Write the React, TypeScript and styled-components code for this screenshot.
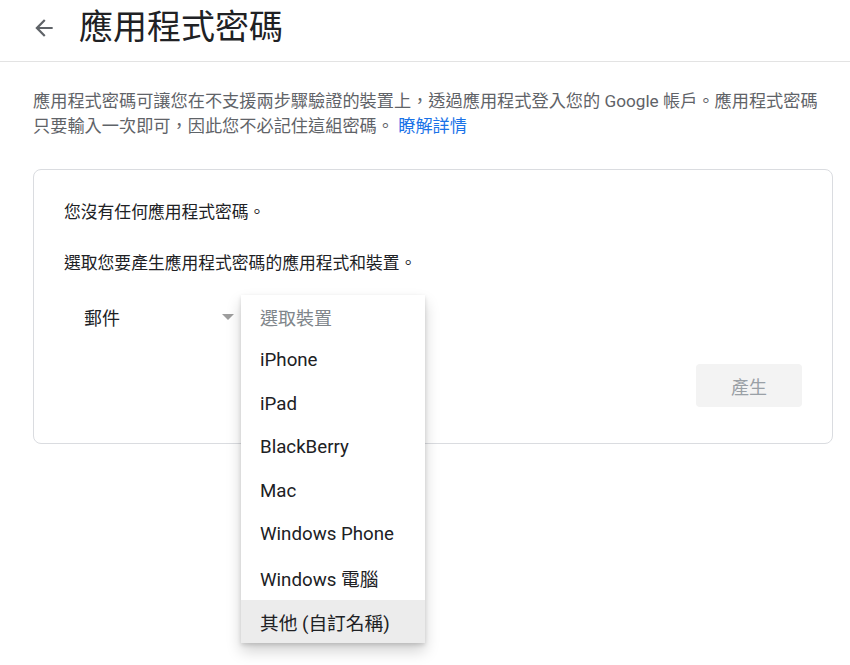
import React from 'react';
import styled, { createGlobalStyle } from 'styled-components';

const GlobalStyle = createGlobalStyle`
  html, body {
    margin: 0;
    padding: 0;
    background: #fff;
    font-family: Roboto, "Noto Sans CJK TC", "Noto Sans", sans-serif;
    color: #202124;
  }
`;

const Page = styled.div`
  width: 850px;
  min-height: 665px;
  overflow: hidden;
`;

const Header = styled.header`
  display: flex;
  align-items: center;
  height: 62px;
  padding-left: 31px;
  border-bottom: 1px solid #e3e3e3;
  box-sizing: border-box;
`;

const BackButton = styled.button`
  display: flex;
  align-items: center;
  justify-content: center;
  width: 26px;
  height: 26px;
  padding: 0;
  margin-right: 22px;
  margin-top: -6px;
  border: none;
  background: transparent;
  color: #5f6368;
  cursor: pointer;
`;

const Title = styled.h1`
  margin: 0 0 8px;
  font-size: 34px;
  font-weight: 400;
  line-height: 40px;
  color: #202124;
`;

const Content = styled.main`
  width: 800px;
  margin: 27px 0 0 33px;
`;

const Intro = styled.p`
  margin: 0;
  font-size: 17.2px;
  line-height: 25px;
  color: #5f6368;
`;

const Link = styled.a`
  color: #1a73e8;
  text-decoration: none;
`;

const Card = styled.section`
  position: relative;
  margin-top: 30px;
  padding: 30px 30px 36px;
  border: 1px solid #dadce0;
  border-radius: 8px;
`;

const CardText = styled.p<{ $gap?: number }>`
  margin: ${({ $gap }) => $gap ?? 0}px 0 0;
  font-size: 16.8px;
  line-height: 24px;
  color: #202124;
`;

const Controls = styled.div`
  display: flex;
  margin-top: 20px;
  height: 44px;
`;

const Select = styled.div`
  position: relative;
  display: flex;
  align-items: center;
  width: 177px;
  height: 44px;
  padding-left: 20px;
  box-sizing: border-box;
  font-size: 18px;
  color: #202124;
`;

const Caret = styled.span`
  position: absolute;
  right: 7px;
  top: 19px;
  width: 0;
  height: 0;
  border-left: 6px solid transparent;
  border-right: 6px solid transparent;
  border-top: 6px solid #9e9e9e;
`;

const Menu = styled.ul`
  position: absolute;
  top: 0;
  left: 0;
  z-index: 10;
  width: 184px;
  margin: 0;
  padding: 0;
  list-style: none;
  background: #fff;
  box-shadow: 0 2px 4px rgba(0, 0, 0, 0.14), 0 8px 14px rgba(0, 0, 0, 0.18);
`;

const MenuItem = styled.li<{ $placeholder?: boolean; $active?: boolean }>`
  display: flex;
  align-items: center;
  height: 43.5px;
  padding-left: 19px;
  font-size: ${({ $placeholder }) => ($placeholder ? 18 : 18.7)}px;
  font-weight: 400;
  color: ${({ $placeholder }) => ($placeholder ? '#80868b' : '#202124')};
  background: ${({ $active }) => ($active ? '#ececec' : 'transparent')};
`;

const Actions = styled.div`
  display: flex;
  justify-content: flex-end;
  margin-top: 25px;
`;

const GenerateButton = styled.button`
  width: 106px;
  height: 43px;
  border: none;
  border-radius: 4px;
  background: #f3f3f3;
  font-family: inherit;
  font-size: 18px;
  color: #9aa0a6;
`;

const devices = ['iPhone', 'iPad', 'BlackBerry', 'Mac', 'Windows Phone', 'Windows 電腦', '其他 (自訂名稱)'];

export default function App() {
  return (
    <Page lang="zh-Hant">
      <GlobalStyle />
      <Header>
        <BackButton aria-label="返回">
          <svg width="26" height="26" viewBox="0 0 24 24" fill="currentColor">
            <path d="M20 11H7.83l5.59-5.59L12 4l-8 8 8 8 1.41-1.41L7.83 13H20v-2z" />
          </svg>
        </BackButton>
        <Title>應用程式密碼</Title>
      </Header>
      <Content>
        <Intro>
          應用程式密碼可讓您在不支援兩步驟驗證的裝置上，透過應用程式登入您的 Google 帳戶。應用程式密碼只要輸入一次即可，因此您不必記住這組密碼。 <Link href="#">瞭解詳情</Link>
        </Intro>
        <Card>
          <CardText>您沒有任何應用程式密碼。</CardText>
          <CardText $gap={27}>選取您要產生應用程式密碼的應用程式和裝置。</CardText>
          <Controls>
            <Select>
              郵件
              <Caret />
            </Select>
            <Select>
              <Menu>
                <MenuItem $placeholder>選取裝置</MenuItem>
                {devices.map((d, i) => (
                  <MenuItem key={d} $active={i === devices.length - 1}>
                    {d}
                  </MenuItem>
                ))}
              </Menu>
            </Select>
          </Controls>
          <Actions>
            <GenerateButton disabled>產生</GenerateButton>
          </Actions>
        </Card>
      </Content>
    </Page>
  );
}
